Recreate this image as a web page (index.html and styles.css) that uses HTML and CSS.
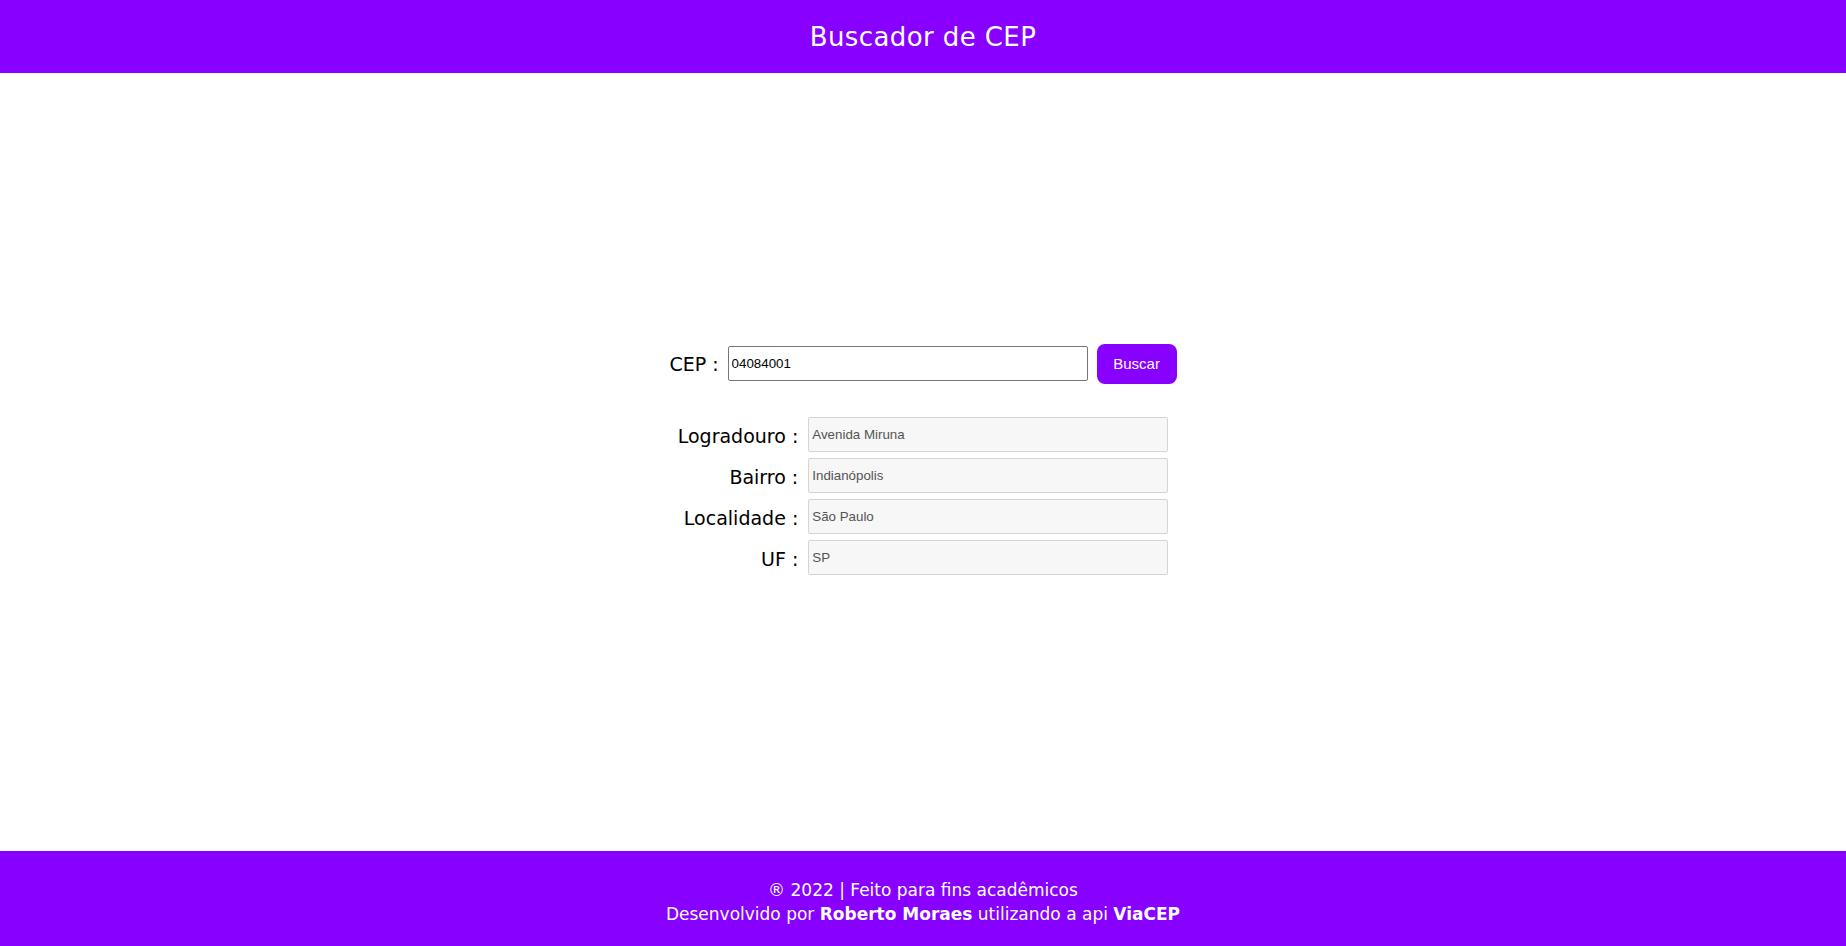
FILE: index.html
```html
<!DOCTYPE html>
<html lang="pt-BR">
<head>
<meta charset="utf-8">
<title>Buscador de CEP</title>
<link rel="stylesheet" href="styles.css">
</head>
<body>
<header class="topbar">
  <h1 class="title">Buscador de CEP</h1>
</header>
<main class="main">
  <form class="search">
    <div class="cep-row">
      <label class="label" for="cep">CEP :</label>
      <input class="cep-input" id="cep" type="text" value="04084001">
      <button class="btn" type="button">Buscar</button>
    </div>
    <div class="fields">
      <label class="label field-label" for="logradouro">Logradouro :</label>
      <input class="field" id="logradouro" type="text" value="Avenida Miruna" readonly>
      <label class="label field-label" for="bairro">Bairro :</label>
      <input class="field" id="bairro" type="text" value="Indianópolis" readonly>
      <label class="label field-label" for="localidade">Localidade :</label>
      <input class="field" id="localidade" type="text" value="São Paulo" readonly>
      <label class="label field-label" for="uf">UF :</label>
      <input class="field" id="uf" type="text" value="SP" readonly>
    </div>
  </form>
</main>
<footer class="footer">
  <p class="footer-line">® 2022 | Feito para fins acadêmicos</p>
  <p class="footer-line">Desenvolvido por <strong>Roberto Moraes</strong> utilizando a api <strong>ViaCEP</strong></p>
</footer>
</body>
</html>
```
FILE: styles.css
```css
* { box-sizing: border-box; }
html, body { height: 100%; }
body {
  margin: 0;
  display: flex;
  flex-direction: column;
  font-family: "DejaVu Sans", "Open Sans", sans-serif;
  color: #000;
  background: #fff;
}
.topbar {
  height: 73px;
  flex: 0 0 73px;
  background: #8800ff;
  display: flex;
  align-items: center;
  justify-content: center;
}
.title {
  margin: 0;
  color: #fff;
  font-weight: 400;
  font-size: 26px;
  letter-spacing: 0.4px;
}
.main {
  flex: 1;
  display: flex;
  align-items: center;
  justify-content: center;
  padding-bottom: 6px;
}
.search {
  display: flex;
  flex-direction: column;
  align-items: center;
  gap: 33px;
}
.cep-row {
  display: flex;
  align-items: center;
  gap: 9px;
}
.label {
  font-size: 19px;
  white-space: nowrap;
}
.field-label {
  padding-top: 4px;
}
.cep-input {
  width: 360px;
  height: 35px;
  border: 1px solid #767676;
  border-radius: 2px;
  padding: 1px 3px;
  font-family: "Liberation Sans", Arial, sans-serif;
  font-size: 13.33px;
  color: #000;
}
.btn {
  width: 80px;
  height: 40px;
  border: 0;
  border-radius: 8px;
  background: #8800ff;
  color: #fff;
  font-family: "Liberation Sans", Arial, sans-serif;
  font-size: 15px;
}
.fields {
  display: grid;
  grid-template-columns: auto 360px;
  column-gap: 10px;
  row-gap: 6px;
  align-items: center;
  justify-items: end;
}
.field {
  width: 360px;
  height: 35px;
  border: 1px solid #d4d4d4;
  border-radius: 2px;
  background: #f7f7f7;
  padding: 1px 3px;
  font-family: "Liberation Sans", Arial, sans-serif;
  font-size: 13.33px;
  color: #545454;
}
.footer {
  height: 95px;
  flex: 0 0 95px;
  background: #8800ff;
  color: #fff;
  display: flex;
  flex-direction: column;
  align-items: center;
  justify-content: center;
  padding-top: 8px;
  font-size: 17px;
  line-height: 23.5px;
}
.footer-line { margin: 0; }
.footer strong { font-weight: 700; }
```
